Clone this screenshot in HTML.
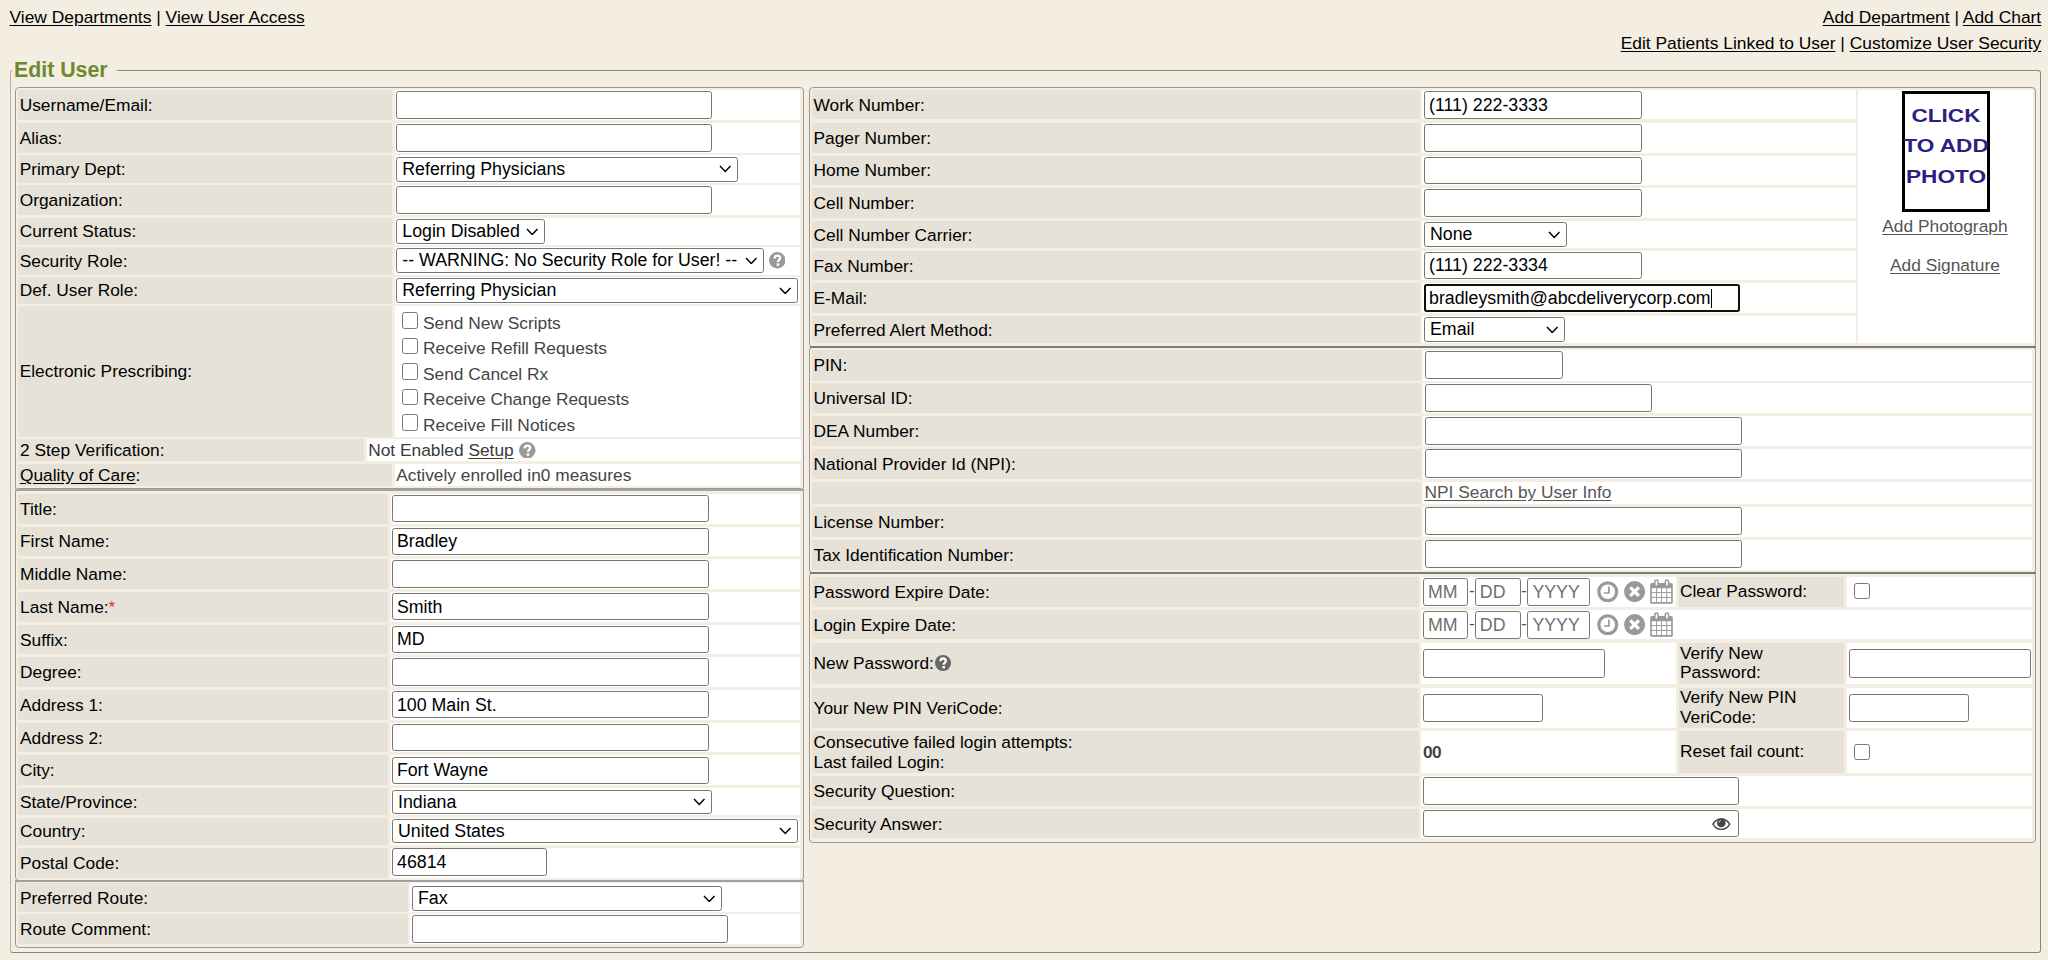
<!DOCTYPE html>
<html><head><meta charset="utf-8"><style>
html,body{margin:0;padding:0;}
body{width:2048px;height:960px;background:#f4ede1;position:relative;overflow:hidden;font-family:"Liberation Sans",sans-serif;}
body>div{position:absolute;}
.t{white-space:nowrap;line-height:20px;}
u,.t[style*=underline]{text-underline-offset:1.6px;}
</style></head><body>
<div class="t" style="left:9.50px;top:7.36px;font-size:17.42px;line-height:20px;color:#000;font-weight:400;"><u>View Departments</u> | <u>View User Access</u></div>
<div class="t" style="right:6.80px;top:7.36px;font-size:17.42px;line-height:20px;color:#000;"><u>Add Department</u> | <u>Add Chart</u></div>
<div class="t" style="right:6.80px;top:33.36px;font-size:17.42px;line-height:20px;color:#000;"><u>Edit Patients Linked to User</u> | <u>Customize User Security</u></div>
<div style="left:10px;top:70px;width:2031px;height:882.5px;border:1.33px solid #858585;border-left-color:#b4b4b4;border-radius:3px;box-sizing:border-box"></div>
<div style="left:12.00px;top:60.00px;width:105.00px;height:20.00px;background:#f4ede1;"></div>
<div class="t" style="left:14.00px;top:57.81px;font-size:21.33px;line-height:25px;color:#6b8a2f;font-weight:700;">Edit User</div>
<div style="left:15.00px;top:86.70px;width:789.00px;height:404.30px;border:1.33px solid #999;border-radius:4px;background:#f4ede1;box-sizing:border-box"></div>
<div style="left:18.20px;top:89.50px;width:373.80px;height:30.20px;background:#e6e2d7;"></div>
<div class="t" style="left:19.70px;top:94.60px;font-size:17.33px;line-height:20px;color:#000;font-weight:400;">Username/Email:</div>
<div style="left:394.80px;top:89.50px;width:405.70px;height:30.20px;background:#ffffff;"></div>
<div style="left:18.20px;top:122.50px;width:373.80px;height:30.00px;background:#e6e2d7;"></div>
<div class="t" style="left:19.70px;top:127.50px;font-size:17.33px;line-height:20px;color:#000;font-weight:400;">Alias:</div>
<div style="left:394.80px;top:122.50px;width:405.70px;height:30.00px;background:#ffffff;"></div>
<div style="left:18.20px;top:155.20px;width:373.80px;height:27.40px;background:#e6e2d7;"></div>
<div class="t" style="left:19.70px;top:158.90px;font-size:17.33px;line-height:20px;color:#000;font-weight:400;">Primary Dept:</div>
<div style="left:394.80px;top:155.20px;width:405.70px;height:27.40px;background:#ffffff;"></div>
<div style="left:18.20px;top:185.20px;width:373.80px;height:29.80px;background:#e6e2d7;"></div>
<div class="t" style="left:19.70px;top:190.10px;font-size:17.33px;line-height:20px;color:#000;font-weight:400;">Organization:</div>
<div style="left:394.80px;top:185.20px;width:405.70px;height:29.80px;background:#ffffff;"></div>
<div style="left:18.20px;top:217.60px;width:373.80px;height:27.00px;background:#e6e2d7;"></div>
<div class="t" style="left:19.70px;top:221.10px;font-size:17.33px;line-height:20px;color:#000;font-weight:400;">Current Status:</div>
<div style="left:394.80px;top:217.60px;width:405.70px;height:27.00px;background:#ffffff;"></div>
<div style="left:18.20px;top:247.20px;width:373.80px;height:27.40px;background:#e6e2d7;"></div>
<div class="t" style="left:19.70px;top:250.90px;font-size:17.33px;line-height:20px;color:#000;font-weight:400;">Security Role:</div>
<div style="left:394.80px;top:247.20px;width:405.70px;height:27.40px;background:#ffffff;"></div>
<div style="left:18.20px;top:277.00px;width:373.80px;height:26.80px;background:#e6e2d7;"></div>
<div class="t" style="left:19.70px;top:280.40px;font-size:17.33px;line-height:20px;color:#000;font-weight:400;">Def. User Role:</div>
<div style="left:394.80px;top:277.00px;width:405.70px;height:26.80px;background:#ffffff;"></div>
<div style="left:18.20px;top:306.00px;width:373.80px;height:130.50px;background:#e6e2d7;"></div>
<div class="t" style="left:19.70px;top:361.25px;font-size:17.33px;line-height:20px;color:#000;font-weight:400;">Electronic Prescribing:</div>
<div style="left:394.80px;top:306.00px;width:405.70px;height:130.50px;background:#ffffff;"></div>
<div style="left:396.25px;top:90.90px;width:316.15px;height:27.90px;border:1.33px solid #767676;border-radius:2.67px;background:#fff;box-sizing:border-box"></div>
<div style="left:396.25px;top:123.70px;width:316.15px;height:28.10px;border:1.33px solid #767676;border-radius:2.67px;background:#fff;box-sizing:border-box"></div>
<div style="left:396.25px;top:156.50px;width:341.45px;height:25.00px;border:1.33px solid #767676;border-radius:2.67px;background:#fff;box-sizing:border-box"></div>
<div class="t" style="left:402.25px;top:158.84px;font-size:17.78px;line-height:20px;color:#000;font-weight:400;">Referring Physicians</div>
<svg style="position:absolute;left:718.95px;top:165.25px" width="12.50" height="7.50"><path d="M1 1 L6.25 6.50 L11.50 1" fill="none" stroke="#000" stroke-width="1.5"/></svg>
<div style="left:396.25px;top:185.80px;width:316.15px;height:28.10px;border:1.33px solid #767676;border-radius:2.67px;background:#fff;box-sizing:border-box"></div>
<div style="left:396.25px;top:218.60px;width:148.75px;height:25.50px;border:1.33px solid #767676;border-radius:2.67px;background:#fff;box-sizing:border-box"></div>
<div class="t" style="left:402.25px;top:221.19px;font-size:17.78px;line-height:20px;color:#000;font-weight:400;">Login Disabled</div>
<svg style="position:absolute;left:526.25px;top:227.60px" width="12.50" height="7.50"><path d="M1 1 L6.25 6.50 L11.50 1" fill="none" stroke="#000" stroke-width="1.5"/></svg>
<div style="left:396.25px;top:247.90px;width:367.25px;height:25.50px;border:1.33px solid #767676;border-radius:2.67px;background:#fff;box-sizing:border-box"></div>
<div class="t" style="left:402.25px;top:250.49px;font-size:17.78px;line-height:20px;color:#000;font-weight:400;">-- WARNING: No Security Role for User! --</div>
<svg style="position:absolute;left:744.75px;top:256.90px" width="12.50" height="7.50"><path d="M1 1 L6.25 6.50 L11.50 1" fill="none" stroke="#000" stroke-width="1.5"/></svg>
<svg style="position:absolute;left:768.90px;top:252.05px" width="16.50" height="16.50" viewBox="0 0 16 16"><circle cx="8" cy="8" r="8" fill="#999"/><path d="M5.4 6.3 C5.4 4.5 6.6 3.5 8.1 3.5 C9.7 3.5 10.8 4.5 10.8 5.9 C10.8 7.7 8.7 7.8 8.7 9.7" fill="none" stroke="#fff" stroke-width="2.3"/><rect x="7.4" y="11" width="2.6" height="2.4" fill="#fff"/></svg>
<div style="left:396.25px;top:277.90px;width:401.75px;height:25.00px;border:1.33px solid #767676;border-radius:2.67px;background:#fff;box-sizing:border-box"></div>
<div class="t" style="left:402.25px;top:280.24px;font-size:17.78px;line-height:20px;color:#000;font-weight:400;">Referring Physician</div>
<svg style="position:absolute;left:779.25px;top:286.65px" width="12.50" height="7.50"><path d="M1 1 L6.25 6.50 L11.50 1" fill="none" stroke="#000" stroke-width="1.5"/></svg>
<div style="left:401.70px;top:312.00px;width:16.50px;height:16.50px;border:1.33px solid #767676;border-radius:2.67px;background:#fff;box-sizing:border-box"></div>
<div class="t" style="left:423.00px;top:312.60px;font-size:17.33px;line-height:20px;color:#444;font-weight:400;">Send New Scripts</div>
<div style="left:401.70px;top:337.60px;width:16.50px;height:16.50px;border:1.33px solid #767676;border-radius:2.67px;background:#fff;box-sizing:border-box"></div>
<div class="t" style="left:423.00px;top:338.15px;font-size:17.33px;line-height:20px;color:#444;font-weight:400;">Receive Refill Requests</div>
<div style="left:401.70px;top:363.20px;width:16.50px;height:16.50px;border:1.33px solid #767676;border-radius:2.67px;background:#fff;box-sizing:border-box"></div>
<div class="t" style="left:423.00px;top:363.70px;font-size:17.33px;line-height:20px;color:#444;font-weight:400;">Send Cancel Rx</div>
<div style="left:401.70px;top:388.80px;width:16.50px;height:16.50px;border:1.33px solid #767676;border-radius:2.67px;background:#fff;box-sizing:border-box"></div>
<div class="t" style="left:423.00px;top:389.25px;font-size:17.33px;line-height:20px;color:#444;font-weight:400;">Receive Change Requests</div>
<div style="left:401.70px;top:414.40px;width:16.50px;height:16.50px;border:1.33px solid #767676;border-radius:2.67px;background:#fff;box-sizing:border-box"></div>
<div class="t" style="left:423.00px;top:414.80px;font-size:17.33px;line-height:20px;color:#444;font-weight:400;">Receive Fill Notices</div>
<div style="left:18.20px;top:439.20px;width:345.80px;height:21.60px;background:#e6e2d7;"></div>
<div class="t" style="left:20.00px;top:440.00px;font-size:17.33px;line-height:20px;color:#000;font-weight:400;">2 Step Verification:</div>
<div style="left:367.00px;top:439.20px;width:433.50px;height:21.60px;background:#ffffff;"></div>
<div class="t" style="left:368.20px;top:440.00px;font-size:17.33px;line-height:20px;color:#3a3a3a;font-weight:400;">Not Enabled <u>Setup</u></div>
<svg style="position:absolute;left:519.30px;top:441.75px" width="16.50" height="16.50" viewBox="0 0 16 16"><circle cx="8" cy="8" r="8" fill="#999"/><path d="M5.4 6.3 C5.4 4.5 6.6 3.5 8.1 3.5 C9.7 3.5 10.8 4.5 10.8 5.9 C10.8 7.7 8.7 7.8 8.7 9.7" fill="none" stroke="#fff" stroke-width="2.3"/><rect x="7.4" y="11" width="2.6" height="2.4" fill="#fff"/></svg>
<div style="left:18.20px;top:464.20px;width:373.80px;height:21.40px;background:#e6e2d7;"></div>
<div class="t" style="left:20.00px;top:465.00px;font-size:17.33px;line-height:20px;color:#000;font-weight:400;"><u>Quality of Care</u>:</div>
<div style="left:394.80px;top:464.20px;width:405.70px;height:21.40px;background:#ffffff;"></div>
<div class="t" style="left:396.30px;top:464.60px;font-size:17.33px;line-height:20px;color:#444;font-weight:400;">Actively enrolled in0 measures</div>
<div style="left:15.00px;top:488.20px;width:789.00px;height:393.00px;border:1.33px solid #999;border-radius:4px;background:#f4ede1;box-sizing:border-box"></div>
<div style="left:15.00px;top:489.00px;width:789.00px;height:2.00px;background:#a4a4a4;"></div>
<div style="left:18.20px;top:493.80px;width:370.00px;height:29.80px;background:#e6e2d7;"></div>
<div class="t" style="left:20.00px;top:498.70px;font-size:17.33px;line-height:20px;color:#000;font-weight:400;">Title:</div>
<div style="left:390.90px;top:493.80px;width:409.60px;height:29.80px;background:#ffffff;"></div>
<div style="left:18.20px;top:526.50px;width:370.00px;height:29.80px;background:#e6e2d7;"></div>
<div class="t" style="left:20.00px;top:531.40px;font-size:17.33px;line-height:20px;color:#000;font-weight:400;">First Name:</div>
<div style="left:390.90px;top:526.50px;width:409.60px;height:29.80px;background:#ffffff;"></div>
<div style="left:18.20px;top:559.20px;width:370.00px;height:29.80px;background:#e6e2d7;"></div>
<div class="t" style="left:20.00px;top:564.10px;font-size:17.33px;line-height:20px;color:#000;font-weight:400;">Middle Name:</div>
<div style="left:390.90px;top:559.20px;width:409.60px;height:29.80px;background:#ffffff;"></div>
<div style="left:18.20px;top:591.90px;width:370.00px;height:29.80px;background:#e6e2d7;"></div>
<div class="t" style="left:20.00px;top:596.80px;font-size:17.33px;line-height:20px;color:#000;font-weight:400;">Last Name:<span style="color:#d33">*</span></div>
<div style="left:390.90px;top:591.90px;width:409.60px;height:29.80px;background:#ffffff;"></div>
<div style="left:18.20px;top:624.60px;width:370.00px;height:29.80px;background:#e6e2d7;"></div>
<div class="t" style="left:20.00px;top:629.50px;font-size:17.33px;line-height:20px;color:#000;font-weight:400;">Suffix:</div>
<div style="left:390.90px;top:624.60px;width:409.60px;height:29.80px;background:#ffffff;"></div>
<div style="left:18.20px;top:657.30px;width:370.00px;height:29.80px;background:#e6e2d7;"></div>
<div class="t" style="left:20.00px;top:662.20px;font-size:17.33px;line-height:20px;color:#000;font-weight:400;">Degree:</div>
<div style="left:390.90px;top:657.30px;width:409.60px;height:29.80px;background:#ffffff;"></div>
<div style="left:18.20px;top:690.00px;width:370.00px;height:29.80px;background:#e6e2d7;"></div>
<div class="t" style="left:20.00px;top:694.90px;font-size:17.33px;line-height:20px;color:#000;font-weight:400;">Address 1:</div>
<div style="left:390.90px;top:690.00px;width:409.60px;height:29.80px;background:#ffffff;"></div>
<div style="left:18.20px;top:722.70px;width:370.00px;height:29.80px;background:#e6e2d7;"></div>
<div class="t" style="left:20.00px;top:727.60px;font-size:17.33px;line-height:20px;color:#000;font-weight:400;">Address 2:</div>
<div style="left:390.90px;top:722.70px;width:409.60px;height:29.80px;background:#ffffff;"></div>
<div style="left:18.20px;top:755.40px;width:370.00px;height:29.80px;background:#e6e2d7;"></div>
<div class="t" style="left:20.00px;top:760.30px;font-size:17.33px;line-height:20px;color:#000;font-weight:400;">City:</div>
<div style="left:390.90px;top:755.40px;width:409.60px;height:29.80px;background:#ffffff;"></div>
<div style="left:18.20px;top:788.10px;width:370.00px;height:26.80px;background:#e6e2d7;"></div>
<div class="t" style="left:20.00px;top:791.50px;font-size:17.33px;line-height:20px;color:#000;font-weight:400;">State/Province:</div>
<div style="left:390.90px;top:788.10px;width:409.60px;height:26.80px;background:#ffffff;"></div>
<div style="left:18.20px;top:817.60px;width:370.00px;height:27.30px;background:#e6e2d7;"></div>
<div class="t" style="left:20.00px;top:821.25px;font-size:17.33px;line-height:20px;color:#000;font-weight:400;">Country:</div>
<div style="left:390.90px;top:817.60px;width:409.60px;height:27.30px;background:#ffffff;"></div>
<div style="left:18.20px;top:847.60px;width:370.00px;height:30.30px;background:#e6e2d7;"></div>
<div class="t" style="left:20.00px;top:852.75px;font-size:17.33px;line-height:20px;color:#000;font-weight:400;">Postal Code:</div>
<div style="left:390.90px;top:847.60px;width:409.60px;height:30.30px;background:#ffffff;"></div>
<div style="left:391.90px;top:494.90px;width:316.80px;height:27.40px;border:1.33px solid #767676;border-radius:2.67px;background:#fff;box-sizing:border-box"></div>
<div style="left:391.90px;top:527.60px;width:316.80px;height:27.40px;border:1.33px solid #767676;border-radius:2.67px;background:#fff;box-sizing:border-box"></div>
<div class="t" style="left:396.90px;top:531.14px;font-size:17.78px;line-height:20px;color:#000;font-weight:400;">Bradley</div>
<div style="left:391.90px;top:560.30px;width:316.80px;height:27.40px;border:1.33px solid #767676;border-radius:2.67px;background:#fff;box-sizing:border-box"></div>
<div style="left:391.90px;top:593.00px;width:316.80px;height:27.40px;border:1.33px solid #767676;border-radius:2.67px;background:#fff;box-sizing:border-box"></div>
<div class="t" style="left:396.90px;top:596.54px;font-size:17.78px;line-height:20px;color:#000;font-weight:400;">Smith</div>
<div style="left:391.90px;top:625.70px;width:316.80px;height:27.40px;border:1.33px solid #767676;border-radius:2.67px;background:#fff;box-sizing:border-box"></div>
<div class="t" style="left:396.90px;top:629.24px;font-size:17.78px;line-height:20px;color:#000;font-weight:400;">MD</div>
<div style="left:391.90px;top:658.40px;width:316.80px;height:27.40px;border:1.33px solid #767676;border-radius:2.67px;background:#fff;box-sizing:border-box"></div>
<div style="left:391.90px;top:691.10px;width:316.80px;height:27.40px;border:1.33px solid #767676;border-radius:2.67px;background:#fff;box-sizing:border-box"></div>
<div class="t" style="left:396.90px;top:694.64px;font-size:17.78px;line-height:20px;color:#000;font-weight:400;">100 Main St.</div>
<div style="left:391.90px;top:723.80px;width:316.80px;height:27.40px;border:1.33px solid #767676;border-radius:2.67px;background:#fff;box-sizing:border-box"></div>
<div style="left:391.90px;top:756.50px;width:316.80px;height:27.40px;border:1.33px solid #767676;border-radius:2.67px;background:#fff;box-sizing:border-box"></div>
<div class="t" style="left:396.90px;top:760.04px;font-size:17.78px;line-height:20px;color:#000;font-weight:400;">Fort Wayne</div>
<div style="left:392.00px;top:789.50px;width:319.70px;height:24.90px;border:1.33px solid #767676;border-radius:2.67px;background:#fff;box-sizing:border-box"></div>
<div class="t" style="left:398.00px;top:791.79px;font-size:17.78px;line-height:20px;color:#000;font-weight:400;">Indiana</div>
<svg style="position:absolute;left:692.95px;top:798.20px" width="12.50" height="7.50"><path d="M1 1 L6.25 6.50 L11.50 1" fill="none" stroke="#000" stroke-width="1.5"/></svg>
<div style="left:392.00px;top:818.70px;width:406.00px;height:24.60px;border:1.33px solid #767676;border-radius:2.67px;background:#fff;box-sizing:border-box"></div>
<div class="t" style="left:398.00px;top:820.84px;font-size:17.78px;line-height:20px;color:#000;font-weight:400;">United States</div>
<svg style="position:absolute;left:779.25px;top:827.25px" width="12.50" height="7.50"><path d="M1 1 L6.25 6.50 L11.50 1" fill="none" stroke="#000" stroke-width="1.5"/></svg>
<div style="left:392.00px;top:848.30px;width:155.30px;height:27.70px;border:1.33px solid #767676;border-radius:2.67px;background:#fff;box-sizing:border-box"></div>
<div class="t" style="left:397.00px;top:851.99px;font-size:17.78px;line-height:20px;color:#000;font-weight:400;">46814</div>
<div style="left:15.00px;top:879.80px;width:789.00px;height:68.20px;border:1.33px solid #999;border-radius:4px;background:#f4ede1;box-sizing:border-box"></div>
<div style="left:15.00px;top:880.00px;width:789.00px;height:2.00px;background:#a0a0a0;"></div>
<div style="left:18.20px;top:883.10px;width:389.90px;height:28.60px;background:#e6e2d7;"></div>
<div class="t" style="left:20.00px;top:888.30px;font-size:17.33px;line-height:20px;color:#000;font-weight:400;">Preferred Route:</div>
<div style="left:410.40px;top:883.10px;width:390.10px;height:28.60px;background:#ffffff;"></div>
<div style="left:18.20px;top:913.80px;width:389.90px;height:30.30px;background:#e6e2d7;"></div>
<div class="t" style="left:20.00px;top:918.80px;font-size:17.33px;line-height:20px;color:#000;font-weight:400;">Route Comment:</div>
<div style="left:410.40px;top:913.80px;width:390.10px;height:30.30px;background:#ffffff;"></div>
<div style="left:412.00px;top:885.70px;width:310.20px;height:25.50px;border:1.33px solid #767676;border-radius:2.67px;background:#fff;box-sizing:border-box"></div>
<div class="t" style="left:418.00px;top:888.29px;font-size:17.78px;line-height:20px;color:#000;font-weight:400;">Fax</div>
<svg style="position:absolute;left:703.45px;top:894.70px" width="12.50" height="7.50"><path d="M1 1 L6.25 6.50 L11.50 1" fill="none" stroke="#000" stroke-width="1.5"/></svg>
<div style="left:412.00px;top:914.80px;width:315.70px;height:28.50px;border:1.33px solid #767676;border-radius:2.67px;background:#fff;box-sizing:border-box"></div>
<div style="left:809.00px;top:86.70px;width:1227.20px;height:261.30px;border:1.33px solid #999;border-radius:4px;background:#f4ede1;box-sizing:border-box"></div>
<div style="left:811.50px;top:90.00px;width:608.80px;height:29.30px;background:#e6e2d7;"></div>
<div class="t" style="left:813.50px;top:94.65px;font-size:17.33px;line-height:20px;color:#000;font-weight:400;">Work Number:</div>
<div style="left:1422.00px;top:90.00px;width:433.50px;height:29.30px;background:#ffffff;"></div>
<div style="left:811.50px;top:122.50px;width:608.80px;height:30.00px;background:#e6e2d7;"></div>
<div class="t" style="left:813.50px;top:127.50px;font-size:17.33px;line-height:20px;color:#000;font-weight:400;">Pager Number:</div>
<div style="left:1422.00px;top:122.50px;width:433.50px;height:30.00px;background:#ffffff;"></div>
<div style="left:811.50px;top:155.50px;width:608.80px;height:29.80px;background:#e6e2d7;"></div>
<div class="t" style="left:813.50px;top:160.40px;font-size:17.33px;line-height:20px;color:#000;font-weight:400;">Home Number:</div>
<div style="left:1422.00px;top:155.50px;width:433.50px;height:29.80px;background:#ffffff;"></div>
<div style="left:811.50px;top:188.30px;width:608.80px;height:29.70px;background:#e6e2d7;"></div>
<div class="t" style="left:813.50px;top:193.15px;font-size:17.33px;line-height:20px;color:#000;font-weight:400;">Cell Number:</div>
<div style="left:1422.00px;top:188.30px;width:433.50px;height:29.70px;background:#ffffff;"></div>
<div style="left:811.50px;top:221.00px;width:608.80px;height:27.40px;background:#e6e2d7;"></div>
<div class="t" style="left:813.50px;top:224.70px;font-size:17.33px;line-height:20px;color:#000;font-weight:400;">Cell Number Carrier:</div>
<div style="left:1422.00px;top:221.00px;width:433.50px;height:27.40px;background:#ffffff;"></div>
<div style="left:811.50px;top:251.30px;width:608.80px;height:29.10px;background:#e6e2d7;"></div>
<div class="t" style="left:813.50px;top:255.85px;font-size:17.33px;line-height:20px;color:#000;font-weight:400;">Fax Number:</div>
<div style="left:1422.00px;top:251.30px;width:433.50px;height:29.10px;background:#ffffff;"></div>
<div style="left:811.50px;top:283.20px;width:608.80px;height:29.80px;background:#e6e2d7;"></div>
<div class="t" style="left:813.50px;top:288.10px;font-size:17.33px;line-height:20px;color:#000;font-weight:400;">E-Mail:</div>
<div style="left:1422.00px;top:283.20px;width:433.50px;height:29.80px;background:#ffffff;"></div>
<div style="left:811.50px;top:316.00px;width:608.80px;height:27.30px;background:#e6e2d7;"></div>
<div class="t" style="left:813.50px;top:319.65px;font-size:17.33px;line-height:20px;color:#000;font-weight:400;">Preferred Alert Method:</div>
<div style="left:1422.00px;top:316.00px;width:433.50px;height:27.30px;background:#ffffff;"></div>
<div style="left:1858.00px;top:90.00px;width:175.00px;height:253.30px;background:#ffffff;"></div>
<div style="left:1424.00px;top:91.10px;width:218.00px;height:27.70px;border:1.33px solid #767676;border-radius:2.67px;background:#fff;box-sizing:border-box"></div>
<div class="t" style="left:1429.00px;top:94.79px;font-size:17.78px;line-height:20px;color:#000;font-weight:400;">(111) 222-3333</div>
<div style="left:1424.00px;top:123.90px;width:218.00px;height:27.70px;border:1.33px solid #767676;border-radius:2.67px;background:#fff;box-sizing:border-box"></div>
<div style="left:1424.00px;top:156.70px;width:218.00px;height:27.70px;border:1.33px solid #767676;border-radius:2.67px;background:#fff;box-sizing:border-box"></div>
<div style="left:1424.00px;top:189.40px;width:218.00px;height:27.70px;border:1.33px solid #767676;border-radius:2.67px;background:#fff;box-sizing:border-box"></div>
<div style="left:1424.00px;top:222.00px;width:142.70px;height:24.60px;border:1.33px solid #767676;border-radius:2.67px;background:#fff;box-sizing:border-box"></div>
<div class="t" style="left:1430.00px;top:224.14px;font-size:17.78px;line-height:20px;color:#000;font-weight:400;">None</div>
<svg style="position:absolute;left:1547.95px;top:230.55px" width="12.50" height="7.50"><path d="M1 1 L6.25 6.50 L11.50 1" fill="none" stroke="#000" stroke-width="1.5"/></svg>
<div style="left:1424.00px;top:251.60px;width:218.00px;height:27.50px;border:1.33px solid #767676;border-radius:2.67px;background:#fff;box-sizing:border-box"></div>
<div class="t" style="left:1429.00px;top:255.19px;font-size:17.78px;line-height:20px;color:#000;font-weight:400;">(111) 222-3334</div>
<div style="left:1424.00px;top:284.30px;width:316.20px;height:27.60px;border:2.67px solid #101010;border-radius:2.67px;background:#fff;box-sizing:border-box"></div>
<div class="t" style="left:1429.00px;top:287.94px;font-size:17.78px;line-height:20px;color:#000;font-weight:400;">bradleysmith@abcdeliverycorp.com</div>
<div style="left:1711px;top:288.5px;width:1.4px;height:19px;background:#000"></div>
<div style="left:1424.00px;top:317.00px;width:141.00px;height:25.10px;border:1.33px solid #767676;border-radius:2.67px;background:#fff;box-sizing:border-box"></div>
<div class="t" style="left:1430.00px;top:319.39px;font-size:17.78px;line-height:20px;color:#000;font-weight:400;">Email</div>
<svg style="position:absolute;left:1546.25px;top:325.80px" width="12.50" height="7.50"><path d="M1 1 L6.25 6.50 L11.50 1" fill="none" stroke="#000" stroke-width="1.5"/></svg>
<div style="left:1901.5px;top:91px;width:88.5px;height:121px;border:3px solid #000;box-sizing:border-box;background:#fff"></div>
<div class="t" style="left:1845.6px;width:200px;text-align:center;top:104.5px;font-size:19px;line-height:22px;font-weight:700;color:#2a2180;transform:scaleX(1.19)">CLICK</div>
<div class="t" style="left:1845.6px;width:200px;text-align:center;top:135.3px;font-size:19px;line-height:22px;font-weight:700;color:#2a2180;transform:scaleX(1.19)">TO ADD</div>
<div class="t" style="left:1845.6px;width:200px;text-align:center;top:166.1px;font-size:19px;line-height:22px;font-weight:700;color:#2a2180;transform:scaleX(1.19)">PHOTO</div>
<div class="t" style="left:1882.30px;top:216.00px;font-size:17.33px;line-height:20px;color:#555;font-weight:400;"><u>Add Photograph</u></div>
<div class="t" style="left:1890.00px;top:254.70px;font-size:17.33px;line-height:20px;color:#555;font-weight:400;"><u>Add Signature</u></div>
<div style="left:809.00px;top:345.50px;width:1227.20px;height:228.50px;border:1.33px solid #999;border-radius:4px;background:#f4ede1;box-sizing:border-box"></div>
<div style="left:809.50px;top:346.00px;width:1226.00px;height:2.00px;background:#7c7c7c;"></div>
<div style="left:811.50px;top:350.20px;width:609.70px;height:30.40px;background:#e6e2d7;"></div>
<div class="t" style="left:813.50px;top:355.40px;font-size:17.33px;line-height:20px;color:#000;font-weight:400;">PIN:</div>
<div style="left:1422.80px;top:350.20px;width:609.60px;height:30.40px;background:#ffffff;"></div>
<div style="left:811.50px;top:383.40px;width:609.70px;height:30.00px;background:#e6e2d7;"></div>
<div class="t" style="left:813.50px;top:388.40px;font-size:17.33px;line-height:20px;color:#000;font-weight:400;">Universal ID:</div>
<div style="left:1422.80px;top:383.40px;width:609.60px;height:30.00px;background:#ffffff;"></div>
<div style="left:811.50px;top:416.40px;width:609.70px;height:29.80px;background:#e6e2d7;"></div>
<div class="t" style="left:813.50px;top:421.30px;font-size:17.33px;line-height:20px;color:#000;font-weight:400;">DEA Number:</div>
<div style="left:1422.80px;top:416.40px;width:609.60px;height:29.80px;background:#ffffff;"></div>
<div style="left:811.50px;top:449.40px;width:609.70px;height:29.60px;background:#e6e2d7;"></div>
<div class="t" style="left:813.50px;top:454.20px;font-size:17.33px;line-height:20px;color:#000;font-weight:400;">National Provider Id (NPI):</div>
<div style="left:1422.80px;top:449.40px;width:609.60px;height:29.60px;background:#ffffff;"></div>
<div style="left:811.50px;top:481.60px;width:609.70px;height:22.60px;background:#e6e2d7;"></div>
<div style="left:1422.80px;top:481.60px;width:609.60px;height:22.60px;background:#ffffff;"></div>
<div style="left:811.50px;top:507.20px;width:609.70px;height:29.80px;background:#e6e2d7;"></div>
<div class="t" style="left:813.50px;top:512.10px;font-size:17.33px;line-height:20px;color:#000;font-weight:400;">License Number:</div>
<div style="left:1422.80px;top:507.20px;width:609.60px;height:29.80px;background:#ffffff;"></div>
<div style="left:811.50px;top:540.00px;width:609.70px;height:29.70px;background:#e6e2d7;"></div>
<div class="t" style="left:813.50px;top:544.85px;font-size:17.33px;line-height:20px;color:#000;font-weight:400;">Tax Identification Number:</div>
<div style="left:1422.80px;top:540.00px;width:609.60px;height:29.70px;background:#ffffff;"></div>
<div style="left:1425.00px;top:350.80px;width:137.60px;height:28.50px;border:1.33px solid #767676;border-radius:2.67px;background:#fff;box-sizing:border-box"></div>
<div style="left:1425.00px;top:383.80px;width:227.40px;height:28.20px;border:1.33px solid #767676;border-radius:2.67px;background:#fff;box-sizing:border-box"></div>
<div style="left:1425.00px;top:416.60px;width:316.80px;height:28.50px;border:1.33px solid #767676;border-radius:2.67px;background:#fff;box-sizing:border-box"></div>
<div style="left:1425.00px;top:449.30px;width:316.80px;height:28.40px;border:1.33px solid #767676;border-radius:2.67px;background:#fff;box-sizing:border-box"></div>
<div class="t" style="left:1424.50px;top:482.30px;font-size:17.33px;line-height:20px;color:#555;font-weight:400;"><u>NPI Search by User Info</u></div>
<div style="left:1425.00px;top:506.90px;width:316.80px;height:28.00px;border:1.33px solid #767676;border-radius:2.67px;background:#fff;box-sizing:border-box"></div>
<div style="left:1425.00px;top:539.60px;width:316.80px;height:28.10px;border:1.33px solid #767676;border-radius:2.67px;background:#fff;box-sizing:border-box"></div>
<div style="left:809.00px;top:572.00px;width:1227.20px;height:271.00px;border:1.33px solid #999;border-radius:4px;background:#f4ede1;box-sizing:border-box"></div>
<div style="left:809.50px;top:572.00px;width:1226.00px;height:2.00px;background:#7c7c7c;"></div>
<div style="left:811.50px;top:577.00px;width:607.30px;height:29.60px;background:#e6e2d7;"></div>
<div class="t" style="left:813.50px;top:581.80px;font-size:17.33px;line-height:20px;color:#000;font-weight:400;">Password Expire Date:</div>
<div style="left:1420.90px;top:577.00px;width:254.80px;height:29.60px;background:#ffffff;"></div>
<div style="left:1678.80px;top:577.00px;width:165.20px;height:29.60px;background:#e6e2d7;"></div>
<div style="left:1847.00px;top:577.00px;width:185.40px;height:29.60px;background:#ffffff;"></div>
<div style="left:811.50px;top:609.80px;width:607.30px;height:29.60px;background:#e6e2d7;"></div>
<div class="t" style="left:813.50px;top:614.60px;font-size:17.33px;line-height:20px;color:#000;font-weight:400;">Login Expire Date:</div>
<div style="left:1420.90px;top:609.80px;width:611.50px;height:29.60px;background:#ffffff;"></div>
<div style="left:811.50px;top:642.50px;width:607.30px;height:41.90px;background:#e6e2d7;"></div>
<div class="t" style="left:813.50px;top:653.45px;font-size:17.33px;line-height:20px;color:#000;font-weight:400;">New Password:</div>
<div style="left:1420.90px;top:642.50px;width:254.80px;height:41.90px;background:#ffffff;"></div>
<div style="left:1678.80px;top:642.50px;width:165.20px;height:41.90px;background:#e6e2d7;"></div>
<div style="left:1847.00px;top:642.50px;width:185.40px;height:41.90px;background:#ffffff;"></div>
<div style="left:811.50px;top:687.50px;width:607.30px;height:40.60px;background:#e6e2d7;"></div>
<div class="t" style="left:813.50px;top:697.80px;font-size:17.33px;line-height:20px;color:#000;font-weight:400;">Your New PIN VeriCode:</div>
<div style="left:1420.90px;top:687.50px;width:254.80px;height:40.60px;background:#ffffff;"></div>
<div style="left:1678.80px;top:687.50px;width:165.20px;height:40.60px;background:#e6e2d7;"></div>
<div style="left:1847.00px;top:687.50px;width:185.40px;height:40.60px;background:#ffffff;"></div>
<div style="left:811.50px;top:731.30px;width:607.30px;height:41.50px;background:#e6e2d7;"></div>
<div class="t" style="left:813.50px;top:731.80px;font-size:17.33px;line-height:20px;color:#000;font-weight:400;">Consecutive failed login attempts:</div>
<div class="t" style="left:813.50px;top:751.50px;font-size:17.33px;line-height:20px;color:#000;font-weight:400;">Last failed Login:</div>
<div style="left:1420.90px;top:731.30px;width:254.80px;height:41.50px;background:#ffffff;"></div>
<div style="left:1678.80px;top:731.30px;width:165.20px;height:41.50px;background:#e6e2d7;"></div>
<div style="left:1847.00px;top:731.30px;width:185.40px;height:41.50px;background:#ffffff;"></div>
<div style="left:811.50px;top:775.90px;width:607.30px;height:29.70px;background:#e6e2d7;"></div>
<div class="t" style="left:813.50px;top:780.75px;font-size:17.33px;line-height:20px;color:#000;font-weight:400;">Security Question:</div>
<div style="left:1420.90px;top:775.90px;width:611.50px;height:29.70px;background:#ffffff;"></div>
<div style="left:811.50px;top:808.80px;width:607.30px;height:29.60px;background:#e6e2d7;"></div>
<div class="t" style="left:813.50px;top:813.60px;font-size:17.33px;line-height:20px;color:#000;font-weight:400;">Security Answer:</div>
<div style="left:1420.90px;top:808.80px;width:611.50px;height:29.60px;background:#ffffff;"></div>
<svg style="position:absolute;left:935.00px;top:655.40px" width="16.00" height="16.00" viewBox="0 0 16 16"><circle cx="8" cy="8" r="8" fill="#666"/><path d="M5.4 6.3 C5.4 4.5 6.6 3.5 8.1 3.5 C9.7 3.5 10.8 4.5 10.8 5.9 C10.8 7.7 8.7 7.8 8.7 9.7" fill="none" stroke="#fff" stroke-width="2.3"/><rect x="7.4" y="11" width="2.6" height="2.4" fill="#fff"/></svg>
<div style="left:1423.00px;top:577.70px;width:45.30px;height:28.30px;border:1.33px solid #767676;border-radius:2.67px;background:#fff;box-sizing:border-box"></div>
<div class="t" style="left:1428.00px;top:581.69px;font-size:17.78px;line-height:20px;color:#707070;font-weight:400;">MM</div>
<div class="t" style="left:1469.00px;top:580.00px;font-size:17.33px;line-height:20px;color:#555;font-weight:400;">-</div>
<div style="left:1474.80px;top:577.70px;width:45.80px;height:28.30px;border:1.33px solid #767676;border-radius:2.67px;background:#fff;box-sizing:border-box"></div>
<div class="t" style="left:1479.80px;top:581.69px;font-size:17.78px;line-height:20px;color:#707070;font-weight:400;">DD</div>
<div class="t" style="left:1521.00px;top:580.00px;font-size:17.33px;line-height:20px;color:#555;font-weight:400;">-</div>
<div style="left:1527.40px;top:577.70px;width:62.60px;height:28.30px;border:1.33px solid #767676;border-radius:2.67px;background:#fff;box-sizing:border-box"></div>
<div class="t" style="left:1532.40px;top:581.69px;font-size:17.78px;line-height:20px;color:#707070;font-weight:400;">YYYY</div>
<svg style="position:absolute;left:1597px;top:580.50px" width="21.5" height="21.5" viewBox="0 0 21.5 21.5"><circle cx="10.75" cy="10.75" r="8.9" fill="none" stroke="#999" stroke-width="3.3"/><path d="M11.9 5.6 V12 H7" fill="none" stroke="#999" stroke-width="1.7"/></svg>
<svg style="position:absolute;left:1623.9px;top:580.65px" width="21.2" height="21.2" viewBox="0 0 21.2 21.2"><circle cx="10.6" cy="10.6" r="10.5" fill="#999"/><path d="M6.3 6.3 L14.9 14.9 M14.9 6.3 L6.3 14.9" stroke="#fff" stroke-width="3.2"/></svg>
<svg style="position:absolute;left:1650px;top:579.15px" width="23" height="25" viewBox="0 0 23 25"><rect x="0.2" y="4.1" width="22.6" height="20.7" rx="1.6" fill="#999"/><rect x="1.9" y="9.2" width="4.2" height="3.9" fill="#fff"/><rect x="1.9" y="14.1" width="4.2" height="3.8" fill="#fff"/><rect x="1.9" y="18.9" width="4.2" height="4.1" fill="#fff"/><rect x="7.1" y="9.2" width="3.9" height="3.9" fill="#fff"/><rect x="7.1" y="14.1" width="3.9" height="3.8" fill="#fff"/><rect x="7.1" y="18.9" width="3.9" height="4.1" fill="#fff"/><rect x="11.9" y="9.2" width="4.3" height="3.9" fill="#fff"/><rect x="11.9" y="14.1" width="4.3" height="3.8" fill="#fff"/><rect x="11.9" y="18.9" width="4.3" height="4.1" fill="#fff"/><rect x="17.2" y="9.2" width="3.9" height="3.9" fill="#fff"/><rect x="17.2" y="14.1" width="3.9" height="3.8" fill="#fff"/><rect x="17.2" y="18.9" width="3.9" height="4.1" fill="#fff"/><rect x="4.1" y="0.2" width="4.7" height="7" rx="2.3" fill="#999"/><rect x="5.6" y="1.8" width="1.7" height="4.7" rx="0.8" fill="#fff"/><rect x="14.6" y="0.2" width="4.7" height="7" rx="2.3" fill="#999"/><rect x="16.1" y="1.8" width="1.7" height="4.7" rx="0.8" fill="#fff"/></svg>
<div style="left:1423.00px;top:610.70px;width:45.30px;height:28.30px;border:1.33px solid #767676;border-radius:2.67px;background:#fff;box-sizing:border-box"></div>
<div class="t" style="left:1428.00px;top:614.69px;font-size:17.78px;line-height:20px;color:#707070;font-weight:400;">MM</div>
<div class="t" style="left:1469.00px;top:613.00px;font-size:17.33px;line-height:20px;color:#555;font-weight:400;">-</div>
<div style="left:1474.80px;top:610.70px;width:45.80px;height:28.30px;border:1.33px solid #767676;border-radius:2.67px;background:#fff;box-sizing:border-box"></div>
<div class="t" style="left:1479.80px;top:614.69px;font-size:17.78px;line-height:20px;color:#707070;font-weight:400;">DD</div>
<div class="t" style="left:1521.00px;top:613.00px;font-size:17.33px;line-height:20px;color:#555;font-weight:400;">-</div>
<div style="left:1527.40px;top:610.70px;width:62.60px;height:28.30px;border:1.33px solid #767676;border-radius:2.67px;background:#fff;box-sizing:border-box"></div>
<div class="t" style="left:1532.40px;top:614.69px;font-size:17.78px;line-height:20px;color:#707070;font-weight:400;">YYYY</div>
<svg style="position:absolute;left:1597px;top:613.50px" width="21.5" height="21.5" viewBox="0 0 21.5 21.5"><circle cx="10.75" cy="10.75" r="8.9" fill="none" stroke="#999" stroke-width="3.3"/><path d="M11.9 5.6 V12 H7" fill="none" stroke="#999" stroke-width="1.7"/></svg>
<svg style="position:absolute;left:1623.9px;top:613.65px" width="21.2" height="21.2" viewBox="0 0 21.2 21.2"><circle cx="10.6" cy="10.6" r="10.5" fill="#999"/><path d="M6.3 6.3 L14.9 14.9 M14.9 6.3 L6.3 14.9" stroke="#fff" stroke-width="3.2"/></svg>
<svg style="position:absolute;left:1650px;top:612.15px" width="23" height="25" viewBox="0 0 23 25"><rect x="0.2" y="4.1" width="22.6" height="20.7" rx="1.6" fill="#999"/><rect x="1.9" y="9.2" width="4.2" height="3.9" fill="#fff"/><rect x="1.9" y="14.1" width="4.2" height="3.8" fill="#fff"/><rect x="1.9" y="18.9" width="4.2" height="4.1" fill="#fff"/><rect x="7.1" y="9.2" width="3.9" height="3.9" fill="#fff"/><rect x="7.1" y="14.1" width="3.9" height="3.8" fill="#fff"/><rect x="7.1" y="18.9" width="3.9" height="4.1" fill="#fff"/><rect x="11.9" y="9.2" width="4.3" height="3.9" fill="#fff"/><rect x="11.9" y="14.1" width="4.3" height="3.8" fill="#fff"/><rect x="11.9" y="18.9" width="4.3" height="4.1" fill="#fff"/><rect x="17.2" y="9.2" width="3.9" height="3.9" fill="#fff"/><rect x="17.2" y="14.1" width="3.9" height="3.8" fill="#fff"/><rect x="17.2" y="18.9" width="3.9" height="4.1" fill="#fff"/><rect x="4.1" y="0.2" width="4.7" height="7" rx="2.3" fill="#999"/><rect x="5.6" y="1.8" width="1.7" height="4.7" rx="0.8" fill="#fff"/><rect x="14.6" y="0.2" width="4.7" height="7" rx="2.3" fill="#999"/><rect x="16.1" y="1.8" width="1.7" height="4.7" rx="0.8" fill="#fff"/></svg>
<div class="t" style="left:1680.00px;top:581.00px;font-size:17.33px;line-height:20px;color:#000;font-weight:400;">Clear Password:</div>
<div style="left:1854.00px;top:583.00px;width:16.30px;height:16.30px;border:1.33px solid #767676;border-radius:2.67px;background:#fff;box-sizing:border-box"></div>
<div style="left:1423.00px;top:649.30px;width:182.30px;height:28.40px;border:1.33px solid #767676;border-radius:2.67px;background:#fff;box-sizing:border-box"></div>
<div class="t" style="left:1680.00px;top:642.50px;font-size:17.33px;line-height:20px;color:#000;font-weight:400;">Verify New</div>
<div class="t" style="left:1680.00px;top:661.80px;font-size:17.33px;line-height:20px;color:#000;font-weight:400;">Password:</div>
<div style="left:1848.60px;top:649.30px;width:182.30px;height:28.40px;border:1.33px solid #767676;border-radius:2.67px;background:#fff;box-sizing:border-box"></div>
<div style="left:1423.00px;top:693.60px;width:120.00px;height:28.40px;border:1.33px solid #767676;border-radius:2.67px;background:#fff;box-sizing:border-box"></div>
<div class="t" style="left:1680.00px;top:687.00px;font-size:17.33px;line-height:20px;color:#000;font-weight:400;">Verify New PIN</div>
<div class="t" style="left:1680.00px;top:707.00px;font-size:17.33px;line-height:20px;color:#000;font-weight:400;">VeriCode:</div>
<div style="left:1848.60px;top:693.60px;width:120.00px;height:28.40px;border:1.33px solid #767676;border-radius:2.67px;background:#fff;box-sizing:border-box"></div>
<div class="t" style="left:1423.00px;top:742.00px;font-size:17.33px;line-height:20px;color:#444;font-weight:700;letter-spacing:-0.6px;">00</div>
<div class="t" style="left:1680.00px;top:741.00px;font-size:17.33px;line-height:20px;color:#000;font-weight:400;">Reset fail count:</div>
<div style="left:1854.00px;top:744.00px;width:16.30px;height:16.30px;border:1.33px solid #767676;border-radius:2.67px;background:#fff;box-sizing:border-box"></div>
<div style="left:1423.00px;top:777.10px;width:316.30px;height:27.90px;border:1.33px solid #767676;border-radius:2.67px;background:#fff;box-sizing:border-box"></div>
<div style="left:1423.00px;top:809.80px;width:316.30px;height:27.50px;border:1.33px solid #767676;border-radius:2.67px;background:#fff;box-sizing:border-box"></div>
<svg style="position:absolute;left:1712px;top:817px" width="19" height="14" viewBox="0 0 19 14"><path d="M0.9 7.2 C3 3.6 6 2 9.3 2 C12.6 2 15.6 3.6 17.7 7.2 C15.6 10.8 12.6 12.4 9.3 12.4 C6 12.4 3 10.8 0.9 7.2 Z" fill="none" stroke="#444" stroke-width="1.4"/><circle cx="9.3" cy="5.9" r="4.3" fill="#444"/><path d="M6.9 5.6 Q7.2 3.9 8.8 3.5" fill="none" stroke="#fff" stroke-width="0.9"/></svg>
</body></html>
